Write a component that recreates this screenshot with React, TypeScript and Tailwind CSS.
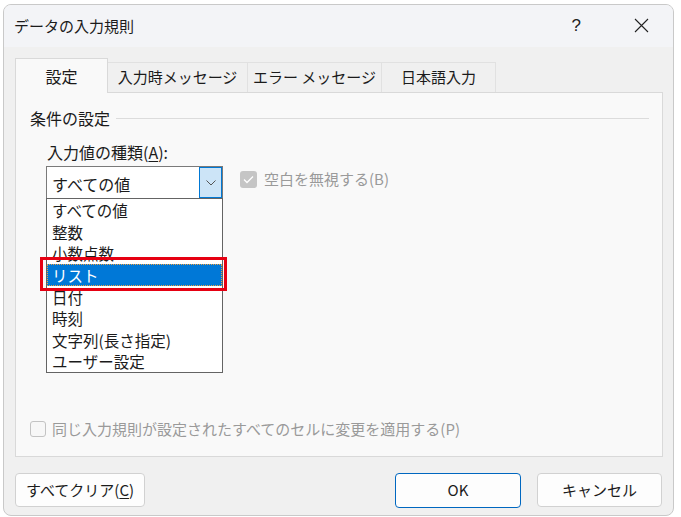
import React from "react";

const items = ["すべての値", "整数", "小数点数", "リスト", "日付", "時刻", "文字列(長さ指定)", "ユーザー設定"];

function Tab({ label, active, w }: { label: string; active?: boolean; w: string }) {
  if (active) {
    return (
      <div className={`${w} relative z-10 flex h-[35px] items-center justify-center border border-b-0 border-[#d9d9d9] bg-[#f9f9f9] text-[16px]`}>
        {label}
      </div>
    );
  }
  return (
    <div className={`${w} -ml-px flex h-[31px] items-center justify-center border border-[#e1e1e1] bg-[#f0f0f0]`}>
      {label}
    </div>
  );
}

export default function App() {
  return (
    <div className="relative h-[517px] w-[681px] overflow-hidden bg-white font-['Noto_Sans_CJK_JP',sans-serif] text-[15px] text-[#1b1b1b]">
      <div className="ml-[3px] mt-[4px] flex h-[512px] w-[671px] flex-col overflow-hidden rounded-[8px] border border-[#c9c9c9] bg-[#f0f0f0]">
        {/* title bar */}
        <div className="flex h-[42px] shrink-0 items-center bg-[#f3f4f7] pl-[10px] pb-[2px]">
          <span className="leading-none">データの入力規則</span>
          <span className="ml-auto font-['Liberation_Sans',sans-serif] text-[17px] leading-none text-[#222]">?</span>
          <svg className="ml-[53px] mr-[24px]" width="15" height="15" viewBox="0 0 15 15">
            <path d="M1 1 L14 14 M14 1 L1 14" stroke="#222" strokeWidth="1.1" fill="none" />
          </svg>
        </div>

        {/* body */}
        <div className="flex flex-1 flex-col px-[11px] pt-[11px]">
          <div className="flex h-[35px] items-end">
            <Tab label="設定" active w="w-[93px]" />
            <Tab label="入力時メッセージ" w="w-[141px]" />
            <Tab label="エラー メッセージ" w="w-[135px]" />
            <Tab label="日本語入力" w="w-[115px]" />
          </div>

          <div className="relative z-[1] -mt-px flex h-[365px] w-[648px] flex-col border border-[#d9d9d9] bg-[#f9f9f9] pl-[14px] pr-[13px]">
            <div className="mt-[15px] flex h-[20px] items-center text-[16px]">
              <span>条件の設定</span>
              <div className="ml-[6px] h-px flex-1 bg-[#dcdcdc]" />
            </div>

            <div className="ml-[17px] mt-[14px] flex h-[20px] items-center text-[16px]">
              入力値の種類(<span className="underline underline-offset-2">A</span>):
            </div>

            <div className="ml-[16px] mt-[4px] flex items-center">
              <div className="relative h-[33px] w-[177px] text-[16px]">
                <div className="flex h-full w-full items-center border border-[#7a7a7a] bg-white">
                  <span className="pl-[5px] pt-[3px]">すべての値</span>
                  <div className="ml-auto flex h-full w-[23px] items-center justify-center border border-[#0078d4] bg-[#cce4f7]">
                    <svg width="10" height="6" viewBox="0 0 10 6">
                      <path d="M0.5 0.5 L5 5 L9.5 0.5" stroke="#555" strokeWidth="1" fill="none" />
                    </svg>
                  </div>
                </div>

                {/* open dropdown list */}
                <div className="absolute left-0 top-[32px] z-20 w-[177px] border border-[#646464] bg-white">
                  {items.map((it) => (
                    <div
                      key={it}
                      className={`flex h-[21.625px] items-center overflow-hidden pl-[5px] pt-[2px] text-[15.5px] leading-none ${
                        it === "リスト" ? "bg-[#0078d7] text-white outline outline-1 -outline-offset-1 outline-dotted outline-[#f0a040]" : ""
                      }`}
                    >
                      {it}
                    </div>
                  ))}
                </div>

                {/* annotation frame */}
                <div className="absolute left-[-6px] top-[91px] z-30 h-[34px] w-[187px] border-[3px] border-[#e60012]" />
              </div>

              <div className="ml-[17px] mt-[-6px] flex items-center text-[#9a9a9a]">
                <div className="flex h-[17px] w-[17px] items-center justify-center rounded-[3px] bg-[#c5c5c5]">
                  <svg width="11" height="9" viewBox="0 0 11 9">
                    <path d="M1 4.5 L4 7.5 L10 1.5" stroke="white" strokeWidth="1.3" fill="none" />
                  </svg>
                </div>
                <span className="ml-[7px]">空白を無視する(B)</span>
              </div>
            </div>

            <div className="mt-[219px] flex items-center text-[#9a9a9a]">
              <div className="h-[16px] w-[16px] rounded-[3px] border border-[#c3c3c3] bg-[#f7f7f7]" />
              <span className="ml-[6px]">同じ入力規則が設定されたすべてのセルに変更を適用する(P)</span>
            </div>
          </div>

          <div className="mt-[16px] flex">
            <button className="flex h-[34px] w-[130px] items-center justify-center rounded-[4px] border border-[#d1d1d1] bg-[#fdfdfd]">
              すべてクリア(<span className="underline underline-offset-2">C</span>)
            </button>
            <button className="ml-auto flex h-[35px] w-[126px] items-center justify-center rounded-[4px] border border-[#0067c0] bg-[#fdfdfd]">
              OK
            </button>
            <button className="ml-[16px] flex h-[34px] w-[125px] items-center justify-center rounded-[4px] border border-[#d1d1d1] bg-[#fdfdfd]">
              キャンセル
            </button>
          </div>
        </div>
      </div>
    </div>
  );
}
